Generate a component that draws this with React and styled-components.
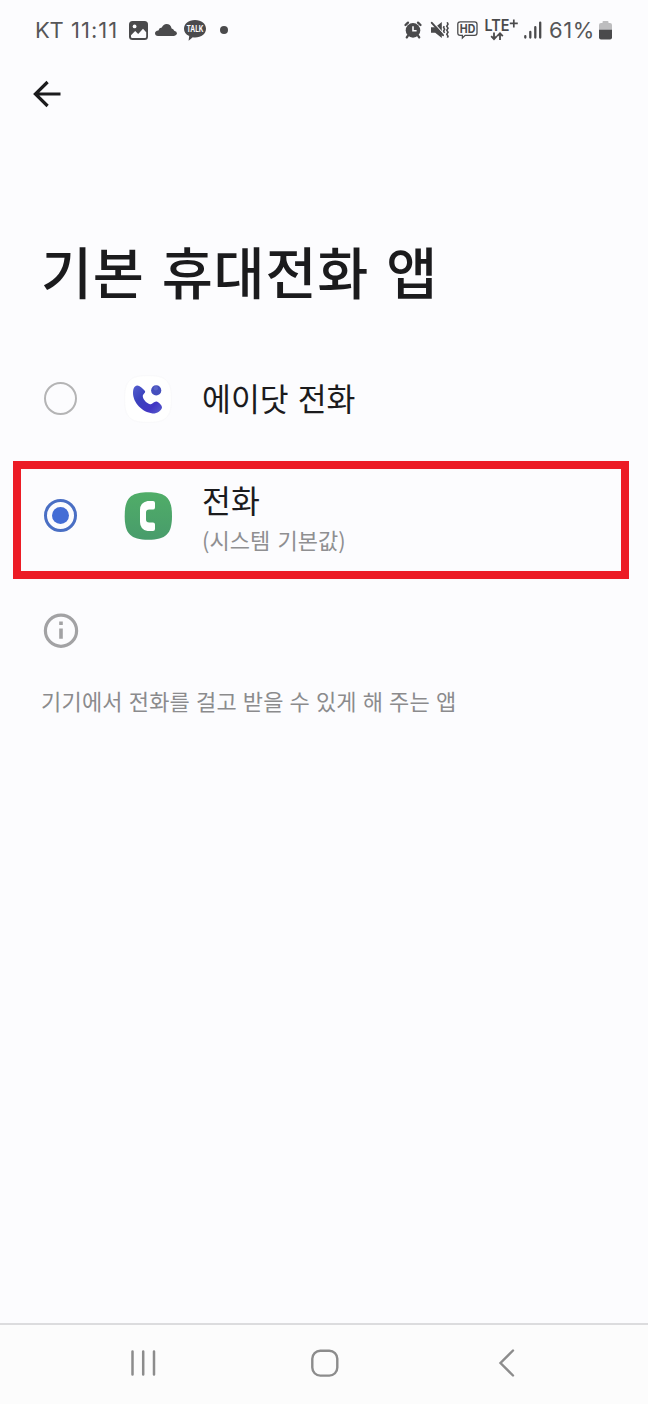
import React from "react";
import styled, { createGlobalStyle } from "styled-components";

const Global = createGlobalStyle`
  * { box-sizing: border-box; }
  body { margin: 0; background: #fcfcfe; }
  svg { display: block; flex: none; overflow: visible; }
`;

const Screen = styled.div`
  display: flex;
  flex-direction: column;
  width: 648px;
  height: 1404px;
  overflow: hidden;
  background: #fcfcfe;
  color: #1b1b1d;
  font-family: "Noto Sans CJK KR", "Noto Sans", sans-serif;
`;

const StatusBar = styled.header`
  display: flex;
  align-items: center;
  justify-content: space-between;
  height: 60px;
  padding: 0 36px 0 35px;
  color: #4a4a4c;
`;

const StatusGroup = styled.div`
  display: flex;
  align-items: center;
  gap: 7px;
`;

const StatusText = styled.span`
  width: ${(p) => p.$width}px;
  color: #565658;
  font: 400 22px/30px Inter, sans-serif;
  letter-spacing: ${(p) => p.$spacing}px;
  white-space: nowrap;
`;

const AppBar = styled.div`
  display: flex;
  align-items: center;
  height: 68px;
  padding-left: 33px;
`;

const BackButton = styled.button`
  padding: 0;
  border: 0;
  background: none;
  color: #1b1b1d;
`;

const Title = styled.h1`
  margin: 100px 0 0 41px;
  height: 109px;
  font-size: 55.5px;
  font-weight: 500;
  line-height: 84px;
  letter-spacing: 0.8px;
  word-spacing: 3.7px;
  white-space: nowrap;
`;

const Option = styled.div`
  display: flex;
  align-items: center;
  height: ${(p) => p.$height}px;
  margin: 0 19px 0 13px;
  padding-left: 23px;
  border: 8px solid ${(p) => (p.$highlighted ? "#ec1c26" : "transparent")};
`;

const Radio = styled.span`
  display: flex;
  align-items: center;
  justify-content: center;
  flex: none;
  width: 33px;
  height: 33px;
  margin-bottom: ${(p) => p.$lift}px;
  border: ${(p) => (p.$checked ? "3px solid #4a6fc4" : "2px solid #b4b4b5")};
  border-radius: 50%;

  &::after {
    content: "";
    width: 17px;
    height: 17px;
    border-radius: 50%;
    background: ${(p) => (p.$checked ? "#446dd5" : "transparent")};
  }
`;

const AppIcon = styled.span`
  width: 48px;
  height: 48px;
  margin: 0 30px ${(p) => p.$lift}px 47px;
`;

const OptionText = styled.div`
  display: flex;
  flex-direction: column;
  margin-bottom: ${(p) => p.$lift}px;
  white-space: nowrap;
`;

const OptionName = styled.span`
  font-size: 31.4px;
  line-height: 44px;
  word-spacing: 2px;
`;

const OptionNote = styled.span`
  color: #8f8f91;
  font-size: 22px;
  line-height: 35px;
  word-spacing: 2.5px;
`;

const Info = styled.section`
  padding: 34px 0 0 40px;
`;

const InfoText = styled.p`
  margin: 33px 0 0 1px;
  color: #8b8b8d;
  font-size: 22px;
  line-height: 36px;
  letter-spacing: 0.2px;
  word-spacing: 0.8px;
  white-space: nowrap;
`;

const NavBar = styled.nav`
  display: flex;
  align-items: center;
  gap: 153px;
  height: 81px;
  margin-top: auto;
  padding: 0 0 4px 130px;
  border-top: 2px solid #dcdcde;
  background: #fcfcfc;
`;

const GalleryIcon = () => (
  <svg width="19" height="19" viewBox="0 0 19 19">
    <rect width="19" height="19" rx="3.5" fill="currentColor" />
    <circle cx="5.6" cy="5.4" r="1.9" fill="#fcfcfe" />
    <path d="M2 14.2 6.2 10l3 3 4.8-5.2 3.2 3.4v4.6q0 1.2-1.2 1.2H3.2Q2 17 2 15.8Z" fill="#fcfcfe" />
  </svg>
);

const CloudIcon = () => (
  <svg width="22" height="12" viewBox="0 0 22 12">
    <path d="M3 12Q0 11.6 0 9.2 0 6.8 3.4 6.4 4.2 3.8 6.8 3.6 8.4 0 11.5 0 15.6 0 16.6 4.4 18.6 4.6 19.2 6.8 22 7.4 22 9.6 21.8 11.6 19 12Z" fill="currentColor" />
  </svg>
);

const TalkIcon = () => (
  <svg width="22" height="21" viewBox="0 0 22 21">
    <path d="M11 0C17.5 0 22 3.8 22 8.7s-4.5 8.8-11 8.8q-1.2 0-2.2-.2L4.6 20.8 5.2 16Q0 13.6 0 8.7C0 3.8 4.5 0 11 0Z" fill="currentColor" />
    <text x="11" y="12.1" textAnchor="middle" textLength="17" lengthAdjust="spacingAndGlyphs" fontFamily="Inter, sans-serif" fontSize="8.8" fontWeight="700" fill="#fcfcfe">TALK</text>
  </svg>
);

const AlarmIcon = () => (
  <svg width="20" height="18" viewBox="0 0 20 18">
    <circle cx="9" cy="9.4" r="7.3" fill="currentColor" />
    <path d="M1.5 4 4 1.6M16.5 4 14 1.6M3.8 14.8 2.8 16.4M14.2 14.8 15.2 16.4" stroke="currentColor" strokeWidth="2.3" strokeLinecap="round" />
    <path d="M9 5.3V9.8h3.6" fill="none" stroke="#fcfcfe" strokeWidth="1.6" />
  </svg>
);

const MuteIcon = () => (
  <svg width="19" height="18" viewBox="0 0 19 18">
    <path d="M0 6.2h4.2L10.8 1v16l-6.6-5.2H0Z" fill="currentColor" />
    <path d="M2 .8 12.6 12.8" stroke="#fcfcfe" strokeWidth="1.2" />
    <path d="M.8 1.8 12 14.2" stroke="currentColor" strokeWidth="2" strokeLinecap="round" />
    <path d="M13.2 5.2l-.6 1.2 1 1.8-1 1.800 1 1.800M16.200 1.200l.8 2-1.200 2 1.200 2-1.200 2 1.200 2-1.200 2 1.200 2-.6 1.400" fill="none" stroke="currentColor" strokeWidth="1.600" />
  </svg>
);

const HdIcon = () => (
  <svg width="21" height="18" viewBox="0 0 21 18">
    <path d="M3.2.9h14.4q2.4 0 2.4 2.4v8.6q0 2.4-2.4 2.4H8.2L5.4 17v-2.700H3.200Q.8 14.300.8 11.900V3.300Q.8.9 3.200.9Z" fill="none" stroke="currentColor" strokeWidth="1.300" />
    <text x="10.500" y="12" textAnchor="middle" textLength="15.500" lengthAdjust="spacingAndGlyphs" fontFamily="Inter, sans-serif" fontSize="12" fontWeight="700" fill="currentColor">HD</text>
  </svg>
);

const LteIcon = () => (
  <svg width="32" height="22" viewBox="0 0 32 22">
    <text x="-.5" y="12" textLength="25" lengthAdjust="spacingAndGlyphs" fontFamily="Inter, sans-serif" fontSize="15.500" fontWeight="600" fill="currentColor">LTE</text>
    <path d="M28.800.4v8M24.800 4.400h8" stroke="currentColor" strokeWidth="1.700" />
    <path d="M9 13.600V20M6.200 17.200l2.800 3 2.800-3M15 21v-6.600M12.200 17.200l2.800-3 2.800 3" fill="none" stroke="currentColor" strokeWidth="1.800" />
  </svg>
);

const SignalIcon = () => (
  <svg width="18" height="18" viewBox="0 0 18 18">
    <path d="M1.300 15.200V16.600M6.300 11V16.600M11.300 6.200V16.600M16.200 1.600V16.600" stroke="currentColor" strokeWidth="2.300" strokeLinecap="round" />
  </svg>
);

const BatteryIcon = () => (
  <svg width="13" height="19" viewBox="0 0 13 19">
    <path d="M3.500 2V1q0-1 1-1h4q1 0 1 1v1h1.500q2 0 2 2v5H0V4q0-2 2-2Z" fill="#bdbdbf" />
    <path d="M0 8.800h13V16.500q0 2-2 2H2q-2 0-2-2Z" fill="currentColor" />
  </svg>
);

const BackArrow = () => (
  <svg width="28" height="26" viewBox="0 0 28 26">
    <path d="M27.500 13H3M14.600 1 2.400 13l12.200 12" fill="none" stroke="currentColor" strokeWidth="3.200" />
  </svg>
);

const AdotIcon = () => (
  <svg width="48" height="48" viewBox="0 0 48 48">
    <defs>
      <linearGradient id="adot" x1="0" y1="0" x2="1" y2="1">
        <stop offset="0" stopColor="#5560cf" />
        <stop offset=".35" stopColor="#3b42bd" />
        <stop offset=".72" stopColor="#4337c4" />
        <stop offset="1" stopColor="#5961cc" />
      </linearGradient>
    </defs>
    <path d="M24 .5C42 .5 47.500 6 47.500 24S42 47.500 24 47.500.5 42 .5 24 6 .5 24 .5Z" fill="#fff" stroke="#f9f9fb" />
    <path d="M11 11.400C14 8.800 17.600 12.200 21 16 21.800 18.200 18.600 19 18.800 21.400 19.200 24.600 22.600 28 26 29.200 28.400 30 29.600 26.400 32.400 26.600 34.600 27 38 30.400 38 32.400 37.400 35.600 33 38.600 28.600 38.400 18.400 37.400 9 28 9 17.800 9 14.800 9.600 12.600 11 11.400Z" fill="url(#adot)" />
    <circle cx="32.200" cy="15.400" r="5.100" fill="#454fbd" />
    <circle cx="31.800" cy="13.200" r="2.200" fill="#6872cf" opacity=".6" />
  </svg>
);

const PhoneIcon = () => (
  <svg width="48" height="48" viewBox="0 0 48 48">
    <defs>
      <linearGradient id="dialer" x1="0" y1="0" x2="0" y2="1">
        <stop offset="0" stopColor="#50ad68" />
        <stop offset="1" stopColor="#489c6b" />
      </linearGradient>
    </defs>
    <path d="M24.300.3C42 .3 48 6 48 24S42 47.700 24.300 47.700.7 42 .7 24 6.500.3 24.300.3Z" fill="url(#dialer)" />
    <path d="M23.500 9H29q2 0 2 2v4.500q0 2-2 2h-3.800q-3.200 0-3.200 3.200v6.600q0 3.200 3.200 3.200H29q2 0 2 2v4.500q0 2-2 2h-5.500Q16 37.500 16 30V18Q16 10.500 23.500 9Z" fill="#fff" />
  </svg>
);

const InfoIcon = () => (
  <svg width="42" height="36" viewBox="0 0 42 36">
    <circle cx="21" cy="17.700" r="15.600" fill="none" stroke="#a2a2a4" strokeWidth="3.200" />
    <path d="M21 8.600v3.400M21 15.500v10.200" stroke="#a2a2a4" strokeWidth="3.600" />
  </svg>
);

const RecentsIcon = () => (
  <svg width="27" height="28" viewBox="0 0 27 28">
    <path d="M2.500 2.500v23M13.200 2.500v23M24 2.500v23" stroke="#8c8c8c" strokeWidth="2.500" strokeLinecap="round" />
  </svg>
);

const HomeIcon = () => (
  <svg width="28" height="28" viewBox="0 0 28 28">
    <rect x="2.300" y="1.800" width="25" height="24.800" rx="8" fill="none" stroke="#8c8c8c" strokeWidth="2.400" />
  </svg>
);

const NavBackIcon = () => (
  <svg width="24" height="28" viewBox="0 0 24 28">
    <path d="M22 1.500 9.500 14 22 26.500" fill="none" stroke="#8c8c8c" strokeWidth="2.400" strokeLinecap="round" />
  </svg>
);

const Dot = styled.span`
  width: 8px;
  height: 8px;
  margin-left: 7px;
  border-radius: 50%;
  background: currentColor;
`;

export default function App() {
  return (
    <Screen>
      <Global />
      <StatusBar>
        <StatusGroup>
          <StatusText $width={29} $spacing={-0.2}>KT</StatusText>
          <StatusText $width={51} $spacing={1}>11:11</StatusText>
          <GalleryIcon />
          <CloudIcon />
          <TalkIcon />
          <Dot />
        </StatusGroup>
        <StatusGroup>
          <AlarmIcon />
          <MuteIcon />
          <HdIcon />
          <LteIcon />
          <SignalIcon />
          <StatusText $width={43} $spacing={0.6}>61%</StatusText>
          <BatteryIcon />
        </StatusGroup>
      </StatusBar>
      <AppBar>
        <BackButton aria-label="뒤로"><BackArrow /></BackButton>
      </AppBar>
      <Title>기본 휴대전화 앱</Title>
      <Option $height={124}>
        <Radio $lift={1} />
        <AppIcon $lift={0}><AdotIcon /></AppIcon>
        <OptionText $lift={2}><OptionName>에이닷 전화</OptionName></OptionText>
      </Option>
      <Option $height={118} $highlighted>
        <Radio $checked $lift={9} />
        <AppIcon $lift={8}><PhoneIcon /></AppIcon>
        <OptionText $lift={6}>
          <OptionName>전화</OptionName>
          <OptionNote>(시스템 기본값)</OptionNote>
        </OptionText>
      </Option>
      <Info>
        <InfoIcon />
        <InfoText>기기에서 전화를 걸고 받을 수 있게 해 주는 앱</InfoText>
      </Info>
      <NavBar>
        <RecentsIcon />
        <HomeIcon />
        <NavBackIcon />
      </NavBar>
    </Screen>
  );
}
